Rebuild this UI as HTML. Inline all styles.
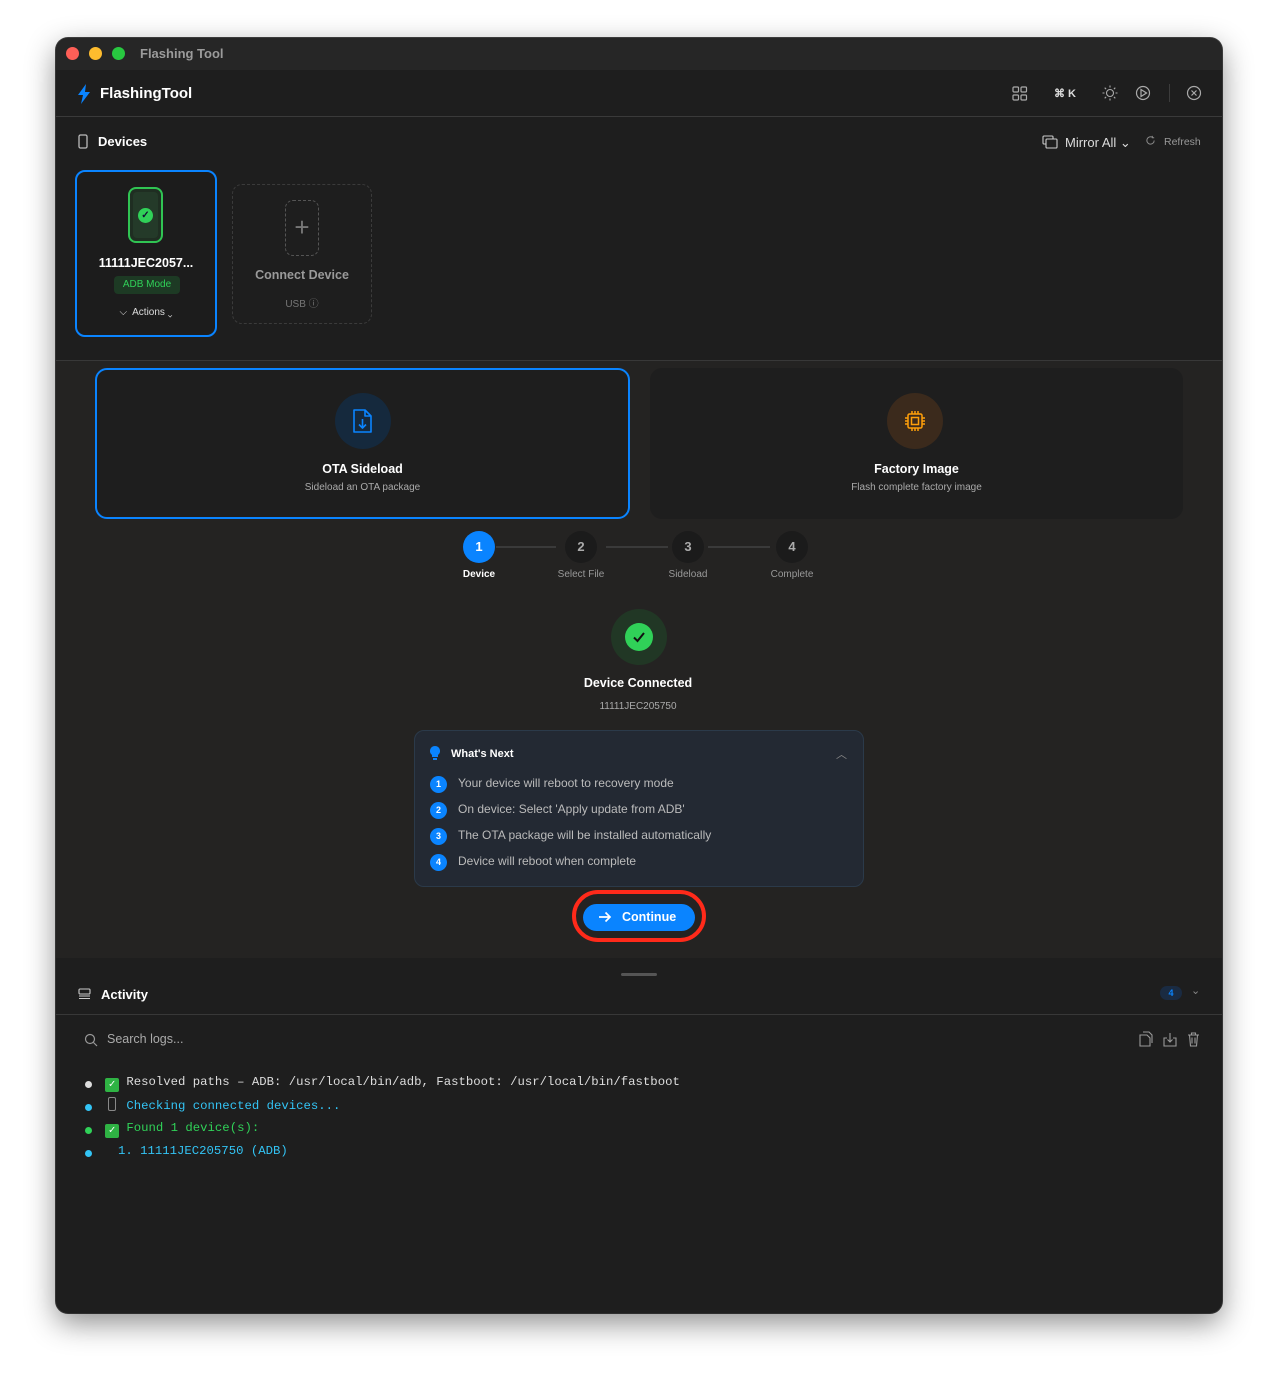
<!DOCTYPE html>
<html><head><meta charset="utf-8"><style>
*{box-sizing:border-box;margin:0;padding:0}
body{width:1278px;height:1387px;background:#fff;font-family:"Liberation Sans",sans-serif;position:relative;overflow:hidden}
.win{position:absolute;left:56px;top:38px;width:1166px;height:1275px;border-radius:12px;background:#1e1e1e;overflow:hidden;box-shadow:0 10px 30px rgba(0,0,0,.45),0 0 0 1px #444}
.abs{position:absolute}
.t{color:#fff;font-weight:bold}
.g{color:#9a9a9a}
.mono{font-family:"Liberation Mono",monospace;font-size:12.3px;line-height:16px}
</style></head><body>
<div class="win">
 <div class="abs" style="left:0;top:0;width:1166px;height:32px;background:#262626"></div>
 <div class="abs" style="left:10px;top:9px;width:13px;height:13px;border-radius:50%;background:#fe5f57"></div>
 <div class="abs" style="left:33px;top:9px;width:13px;height:13px;border-radius:50%;background:#febc2e"></div>
 <div class="abs" style="left:56px;top:9px;width:13px;height:13px;border-radius:50%;background:#28c840"></div>
 <div class="abs" style="left:84px;top:8px;font-size:13px;font-weight:bold;color:#9b9b9b">Flashing Tool</div>
 <svg class="abs" style="left:20px;top:46px" width="16" height="20" viewBox="0 0 16 20"><path d="M10 0 L2 11 H7 L5 20 L14 8 H9 Z" fill="#0a84ff"/></svg>
 <div class="abs t" style="left:44px;top:47px;font-size:15px">FlashingTool</div>
 <div class="abs" style="left:0;top:78px;width:1166px;height:1px;background:#3a3a3a"></div>
 <svg class="abs" style="left:956px;top:48px" width="16" height="15" viewBox="0 0 16 15" fill="none" stroke="#aaa" stroke-width="1.2"><rect x="1" y="1" width="5.5" height="5" rx="1"/><rect x="9" y="1" width="5.5" height="5" rx="1"/><rect x="1" y="9" width="5.5" height="5" rx="1"/><rect x="9" y="9" width="5.5" height="5" rx="1"/></svg>
 <div class="abs" style="left:998px;top:49px;font-size:11px;color:#ddd;font-weight:bold">⌘ K</div>
 <svg class="abs" style="left:1046px;top:47px" width="16" height="16" viewBox="0 0 16 16" fill="none" stroke="#aaa" stroke-width="1.1"><circle cx="8" cy="8" r="3.5"/><path d="M8 0.5v2M8 13.5v2M0.5 8h2M13.5 8h2M2.7 2.7l1.4 1.4M11.9 11.9l1.4 1.4M2.7 13.3l1.4-1.4M11.9 4.1l1.4-1.4"/></svg>
 <svg class="abs" style="left:1079px;top:47px" width="16" height="16" viewBox="0 0 16 16" fill="none" stroke="#aaa" stroke-width="1.2"><circle cx="8" cy="8" r="6.5"/><path d="M6 4.5 L11.5 8 L6 11.5 Z"/></svg>
 <div class="abs" style="left:1113px;top:46px;width:1px;height:18px;background:#3c3c3c"></div>
 <svg class="abs" style="left:1130px;top:47px" width="16" height="16" viewBox="0 0 16 16" fill="none" stroke="#aaa" stroke-width="1.2"><circle cx="8" cy="8" r="6.5"/><path d="M5.5 5.5l5 5M10.5 5.5l-5 5"/></svg>
 <svg class="abs" style="left:22px;top:96px" width="10" height="15" viewBox="0 0 10 15" fill="none" stroke="#bbb" stroke-width="1.3"><rect x="1" y="1" width="8" height="13" rx="1.5"/></svg>
 <div class="abs t" style="left:42px;top:96px;font-size:13px">Devices</div>
 <svg class="abs" style="left:986px;top:97px" width="16" height="14" viewBox="0 0 16 14" fill="none" stroke="#ccc" stroke-width="1.1"><rect x="1" y="1" width="10" height="8" rx="1"/><rect x="4" y="4" width="11" height="9" rx="1" fill="#1e1e1e"/></svg>
 <div class="abs" style="left:1009px;top:97px;font-size:13px;color:#ddd">Mirror All ⌄</div>
 <svg class="abs" style="left:1089px;top:97px" width="11" height="11" viewBox="0 0 12 12" fill="none" stroke="#888" stroke-width="1.1"><path d="M10 6a4 4 0 1 1-2-3.5M8 1v2h2"/></svg>
 <div class="abs" style="left:1108px;top:98px;font-size:10.5px;color:#999">Refresh</div>
 <div class="abs" style="left:19px;top:132px;width:142px;height:167px;border:2px solid #0a84ff;border-radius:10px;background:#1c1c1c"></div>
 <div class="abs" style="left:72px;top:149px;width:35px;height:56px;border:2px solid #30c453;border-radius:8px;background:#1f2e22"><div style="position:absolute;left:3px;top:3px;right:3px;bottom:3px;border-radius:4px;background:#243a29"></div><div style="position:absolute;left:8px;top:19px;width:15px;height:15px;border-radius:50%;background:#30d158;color:#113;font-size:10px;text-align:center;line-height:15px;font-weight:bold">✓</div></div>
 <div class="abs t" style="left:19px;top:218px;width:142px;text-align:center;font-size:12.5px">11111JEC2057...</div>
 <div class="abs" style="left:58px;top:238px;width:66px;height:18px;border-radius:4px;background:#1d3a24;color:#30d158;font-size:10px;text-align:center;line-height:18px">ADB Mode</div>
 <div class="abs" style="left:19px;top:269px;width:142px;text-align:center;font-size:10px;color:#ddd">⌵&nbsp; Actions ⌄</div>
 <div class="abs" style="left:176px;top:146px;width:140px;height:140px;border:1.5px dashed #3b3b3b;border-radius:10px"></div>
 <div class="abs" style="left:229px;top:162px;width:34px;height:56px;border:1.5px dashed #555;border-radius:8px;color:#777;font-size:26px;text-align:center;line-height:52px;font-weight:300">+</div>
 <div class="abs" style="left:176px;top:230px;width:140px;text-align:center;font-size:12.5px;color:#9a9a9a;font-weight:bold">Connect Device</div>
 <div class="abs" style="left:176px;top:257px;width:140px;text-align:center;font-size:10px;color:#777">USB ⓘ</div>
 <div class="abs" style="left:0;top:322px;width:1166px;height:598px;background:#242322;border-top:1px solid #383838"></div>
 <div class="abs" style="left:39px;top:330px;width:535px;height:151px;border:2px solid #0a84ff;border-radius:12px;background:#1e1e1e"></div>
 <div class="abs" style="left:279px;top:355px;width:56px;height:56px;border-radius:50%;background:#15293d"></div>
 <svg class="abs" style="left:296px;top:370px" width="22" height="26" viewBox="0 0 22 26" fill="none" stroke="#0a84ff" stroke-width="1.6" stroke-linejoin="round"><path d="M2 2h11l6 6v16H2z M13 2v6h6 M10.5 11v9 M7 16.5l3.5 3.5 3.5-3.5"/></svg>
 <div class="abs t" style="left:39px;top:424px;width:535px;text-align:center;font-size:12.5px">OTA Sideload</div>
 <div class="abs" style="left:39px;top:444px;width:535px;text-align:center;font-size:10px;color:#aaa">Sideload an OTA package</div>
 <div class="abs" style="left:594px;top:330px;width:533px;height:151px;border-radius:12px;background:#1e1e1e"></div>
 <div class="abs" style="left:831px;top:355px;width:56px;height:56px;border-radius:50%;background:#3b2a1c"></div>
 <svg class="abs" style="left:848px;top:372px" width="22" height="22" viewBox="0 0 22 22" fill="none" stroke="#ff9f0a" stroke-width="1.5"><rect x="4" y="4" width="14" height="14" rx="1.5"/><rect x="7.5" y="7.5" width="7" height="7"/><path d="M8 1v3M11 1v3M14 1v3M8 18v3M11 18v3M14 18v3M1 8h3M1 11h3M1 14h3M18 8h3M18 11h3M18 14h3"/></svg>
 <div class="abs t" style="left:594px;top:424px;width:533px;text-align:center;font-size:12.5px">Factory Image</div>
 <div class="abs" style="left:594px;top:444px;width:533px;text-align:center;font-size:10px;color:#aaa">Flash complete factory image</div>
 <div class="abs" style="left:440px;top:508px;width:60px;height:2px;background:#3a3a3a"></div>
 <div class="abs" style="left:550px;top:508px;width:62px;height:2px;background:#3a3a3a"></div>
 <div class="abs" style="left:652px;top:508px;width:62px;height:2px;background:#3a3a3a"></div>
 <div class="abs t" style="left:407px;top:493px;width:32px;height:32px;border-radius:50%;background:#0a84ff;text-align:center;line-height:32px;font-size:13px">1</div>
 <div class="abs" style="left:509px;top:493px;width:32px;height:32px;border-radius:50%;background:#1b1b1b;text-align:center;line-height:32px;font-size:13px;color:#aaa;font-weight:bold">2</div>
 <div class="abs" style="left:616px;top:493px;width:32px;height:32px;border-radius:50%;background:#1b1b1b;text-align:center;line-height:32px;font-size:13px;color:#aaa;font-weight:bold">3</div>
 <div class="abs" style="left:720px;top:493px;width:32px;height:32px;border-radius:50%;background:#1b1b1b;text-align:center;line-height:32px;font-size:13px;color:#aaa;font-weight:bold">4</div>
 <div class="abs t" style="left:383px;top:531px;width:80px;text-align:center;font-size:10px">Device</div>
 <div class="abs" style="left:485px;top:531px;width:80px;text-align:center;font-size:10px;color:#999">Select File</div>
 <div class="abs" style="left:592px;top:531px;width:80px;text-align:center;font-size:10px;color:#999">Sideload</div>
 <div class="abs" style="left:696px;top:531px;width:80px;text-align:center;font-size:10px;color:#999">Complete</div>
 <div class="abs" style="left:555px;top:571px;width:56px;height:56px;border-radius:50%;background:#213725"></div>
 <div class="abs" style="left:569px;top:585px;width:28px;height:28px;border-radius:50%;background:#30d158"></div>
 <svg class="abs" style="left:574px;top:590px" width="18" height="18" viewBox="0 0 18 18" fill="none" stroke="#111" stroke-width="2"><path d="M4 9.5l3.5 3.5 6.5-8"/></svg>
 <div class="abs t" style="left:432px;top:638px;width:300px;text-align:center;font-size:12.5px">Device Connected</div>
 <div class="abs" style="left:432px;top:663px;width:300px;text-align:center;font-size:10px;color:#aaa">11111JEC205750</div>
 <div class="abs" style="left:358px;top:692px;width:450px;height:157px;border:1px solid #2b3a4a;border-radius:10px;background:#232933"></div>
 <svg class="abs" style="left:374px;top:708px" width="10" height="15" viewBox="0 0 10 15"><path d="M5 0a5 5 0 0 1 3 9v2H2V9A5 5 0 0 1 5 0z" fill="#0a84ff"/><rect x="3" y="12" width="4" height="2" fill="#0a84ff"/></svg>
 <div class="abs t" style="left:395px;top:710px;font-size:11px">What's Next</div>
 <div class="abs" style="left:780px;top:708px;font-size:11px;color:#888">︿</div>
 <div class="abs" style="left:374px;top:738px;width:17px;height:17px;border-radius:50%;background:#0a84ff;color:#fff;font-size:9px;font-weight:bold;text-align:center;line-height:17px">1</div>
 <div class="abs" style="left:374px;top:764px;width:17px;height:17px;border-radius:50%;background:#0a84ff;color:#fff;font-size:9px;font-weight:bold;text-align:center;line-height:17px">2</div>
 <div class="abs" style="left:374px;top:790px;width:17px;height:17px;border-radius:50%;background:#0a84ff;color:#fff;font-size:9px;font-weight:bold;text-align:center;line-height:17px">3</div>
 <div class="abs" style="left:374px;top:816px;width:17px;height:17px;border-radius:50%;background:#0a84ff;color:#fff;font-size:9px;font-weight:bold;text-align:center;line-height:17px">4</div>
 <div class="abs" style="left:402px;top:737px;font-size:12px;color:#bbb;line-height:16px">Your device will reboot to recovery mode</div>
 <div class="abs" style="left:402px;top:763px;font-size:12px;color:#bbb;line-height:16px">On device: Select 'Apply update from ADB'</div>
 <div class="abs" style="left:402px;top:789px;font-size:12px;color:#bbb;line-height:16px">The OTA package will be installed automatically</div>
 <div class="abs" style="left:402px;top:815px;font-size:12px;color:#bbb;line-height:16px">Device will reboot when complete</div>
 <div class="abs" style="left:516px;top:852px;width:134px;height:52px;border:4px solid #ff2a1a;border-radius:26px"></div>
 <div class="abs" style="left:527px;top:866px;width:112px;height:27px;border-radius:14px;background:#0a84ff"></div>
 <svg class="abs" style="left:542px;top:872px" width="14" height="14" viewBox="0 0 14 14" fill="none" stroke="#fff" stroke-width="1.7"><path d="M1 7h11M7.5 2.5L12 7l-4.5 4.5"/></svg>
 <div class="abs t" style="left:566px;top:872px;font-size:12.5px">Continue</div>
 <div class="abs" style="left:565px;top:935px;width:36px;height:3px;border-radius:2px;background:#555"></div>
 <svg class="abs" style="left:22px;top:950px" width="13" height="12" viewBox="0 0 13 12" fill="none" stroke="#ccc" stroke-width="1.1"><rect x="1" y="1" width="11" height="5" rx="1"/><path d="M1 8h11M1 10.5h11"/></svg>
 <div class="abs t" style="left:45px;top:949px;font-size:13px">Activity</div>
 <div class="abs" style="left:1104px;top:948px;width:22px;height:14px;border-radius:7px;background:#1a2b42;color:#0a84ff;font-size:9px;font-weight:bold;text-align:center;line-height:14px">4</div>
 <div class="abs" style="left:1135px;top:946px;font-size:11px;color:#888">⌄</div>
 <div class="abs" style="left:0;top:976px;width:1166px;height:1px;background:#383838"></div>
 <svg class="abs" style="left:28px;top:995px" width="14" height="14" viewBox="0 0 14 14" fill="none" stroke="#999" stroke-width="1.2"><circle cx="6" cy="6" r="4.5"/><path d="M9.5 9.5L13 13"/></svg>
 <div class="abs" style="left:51px;top:994px;font-size:12.5px;color:#aaa">Search logs...</div>
 <svg class="abs" style="left:1083px;top:993px" width="14" height="16" viewBox="0 0 14 16" fill="none" stroke="#999" stroke-width="1.1"><path d="M1 4h7l3 3v8H1z M4 1h6l3 3v8"/></svg>
 <svg class="abs" style="left:1107px;top:994px" width="14" height="15" viewBox="0 0 14 15" fill="none" stroke="#999" stroke-width="1.1"><path d="M4 6H1v8h12V6h-3M7 1v9M4.5 7.5L7 10l2.5-2.5"/></svg>
 <svg class="abs" style="left:1131px;top:994px" width="13" height="15" viewBox="0 0 13 15" fill="none" stroke="#999" stroke-width="1.1"><path d="M1 3h11M4.5 3V1h4v2M2.5 3l1 11h6l1-11M5 5.5v6M8 5.5v6"/></svg>
 <div class="abs" style="left:29px;top:1043px;width:7px;height:7px;border-radius:50%;background:#ddd"></div>
 <div class="abs" style="left:29px;top:1066px;width:7px;height:7px;border-radius:50%;background:#33c4f5"></div>
 <div class="abs" style="left:29px;top:1089px;width:7px;height:7px;border-radius:50%;background:#30d158"></div>
 <div class="abs" style="left:29px;top:1112px;width:7px;height:7px;border-radius:50%;background:#33c4f5"></div>
 <div class="abs mono" style="left:49px;top:1036px;color:#ddd"><span style="display:inline-block;width:14px;height:14px;background:#2fb344;border-radius:2px;color:#fff;font-size:11px;text-align:center;line-height:14px;vertical-align:-2px">✓</span> Resolved paths – ADB: /usr/local/bin/adb, Fastboot: /usr/local/bin/fastboot</div>
 <div class="abs mono" style="left:49px;top:1059px;color:#33c4f5"><span style="display:inline-block;width:8px;height:14px;border:1px solid #888;border-radius:2px;margin:0 3px;vertical-align:-2px"></span> Checking connected devices...</div>
 <div class="abs mono" style="left:49px;top:1082px;color:#30d158"><span style="display:inline-block;width:14px;height:14px;background:#2fb344;border-radius:2px;color:#fff;font-size:11px;text-align:center;line-height:14px;vertical-align:-2px">✓</span> Found 1 device(s):</div>
 <div class="abs mono" style="left:62px;top:1105px;color:#33c4f5">1. 11111JEC205750 (ADB)</div>
</div>
</body></html>
